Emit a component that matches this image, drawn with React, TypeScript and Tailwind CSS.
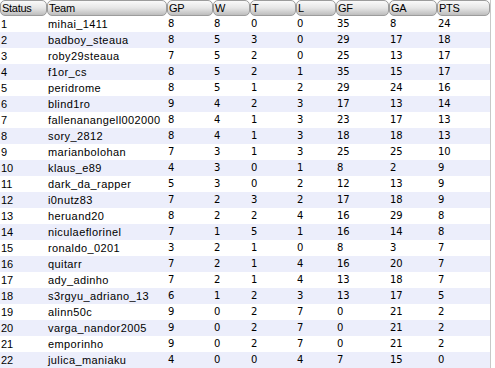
import React from "react";

type Row = [string, number, number, number, number, number, number, number];

const rows: Row[] = [
  ["mihai_1411", 8, 8, 0, 0, 35, 8, 24],
  ["badboy_steaua", 8, 5, 3, 0, 29, 17, 18],
  ["roby29steaua", 7, 5, 2, 0, 25, 13, 17],
  ["f1or_cs", 8, 5, 2, 1, 35, 15, 17],
  ["peridrome", 8, 5, 1, 2, 29, 24, 16],
  ["blind1ro", 9, 4, 2, 3, 17, 13, 14],
  ["fallenanangell002000", 8, 4, 1, 3, 23, 17, 13],
  ["sory_2812", 8, 4, 1, 3, 18, 18, 13],
  ["marianbolohan", 7, 3, 1, 3, 25, 25, 10],
  ["klaus_e89", 4, 3, 0, 1, 8, 2, 9],
  ["dark_da_rapper", 5, 3, 0, 2, 12, 13, 9],
  ["i0nutz83", 7, 2, 3, 2, 17, 18, 9],
  ["heruand20", 8, 2, 2, 4, 16, 29, 8],
  ["niculaeflorinel", 7, 1, 5, 1, 16, 14, 8],
  ["ronaldo_0201", 3, 2, 1, 0, 8, 3, 7],
  ["quitarr", 7, 2, 1, 4, 16, 20, 7],
  ["ady_adinho", 7, 2, 1, 4, 13, 18, 7],
  ["s3rgyu_adriano_13", 6, 1, 2, 3, 13, 17, 5],
  ["alinn50c", 9, 0, 2, 7, 0, 21, 2],
  ["varga_nandor2005", 9, 0, 2, 7, 0, 21, 2],
  ["emporinho", 9, 0, 2, 7, 0, 21, 2],
  ["julica_maniaku", 4, 0, 0, 4, 7, 15, 0],
];

const headers = ["Status", "Team", "GP", "W", "T", "L", "GF", "GA", "PTS"];
const cols = "grid grid-cols-[47px_120px_46px_37px_46px_40px_53px_48px_53px]";

export default function App() {
  return (
    <div className="w-[495px] h-[368px] overflow-hidden bg-white font-['DejaVu_Sans',sans-serif] text-[10px] text-black">
      <div className="w-[491px] border-r border-[#c8c8c8] h-full">
        {/* Header */}
        <div className={`${cols} h-4`}>
          {headers.map((h) => (
            <div
              key={h}
              className="h-4 rounded-[5px] border border-[#9c9c9c] bg-gradient-to-b from-[#fafafa] via-[#e6e6e6] to-[#bdbdbd] pl-[1px] leading-[14px] text-[11px] font-['Liberation_Sans',sans-serif] tracking-tight"
            >
              {h}
            </div>
          ))}
        </div>
        {/* Rows */}
        {rows.map((r, i) => (
          <div
            key={i}
            className={`${cols} h-4 leading-4 ${i % 2 === 1 ? "bg-[#eceefb]" : "bg-white"}`}
          >
            <div className="pl-[1px] font-['Liberation_Sans',sans-serif] text-[11px]">{i + 1}</div>
            <div className="pl-[1px] font-['Liberation_Sans',sans-serif] text-[11px] tracking-[0.4px] whitespace-nowrap">
              {r[0]}
            </div>
            {r.slice(1).map((v, j) => (
              <div key={j} className="pl-[1px]">{v}</div>
            ))}
          </div>
        ))}
      </div>
    </div>
  );
}
